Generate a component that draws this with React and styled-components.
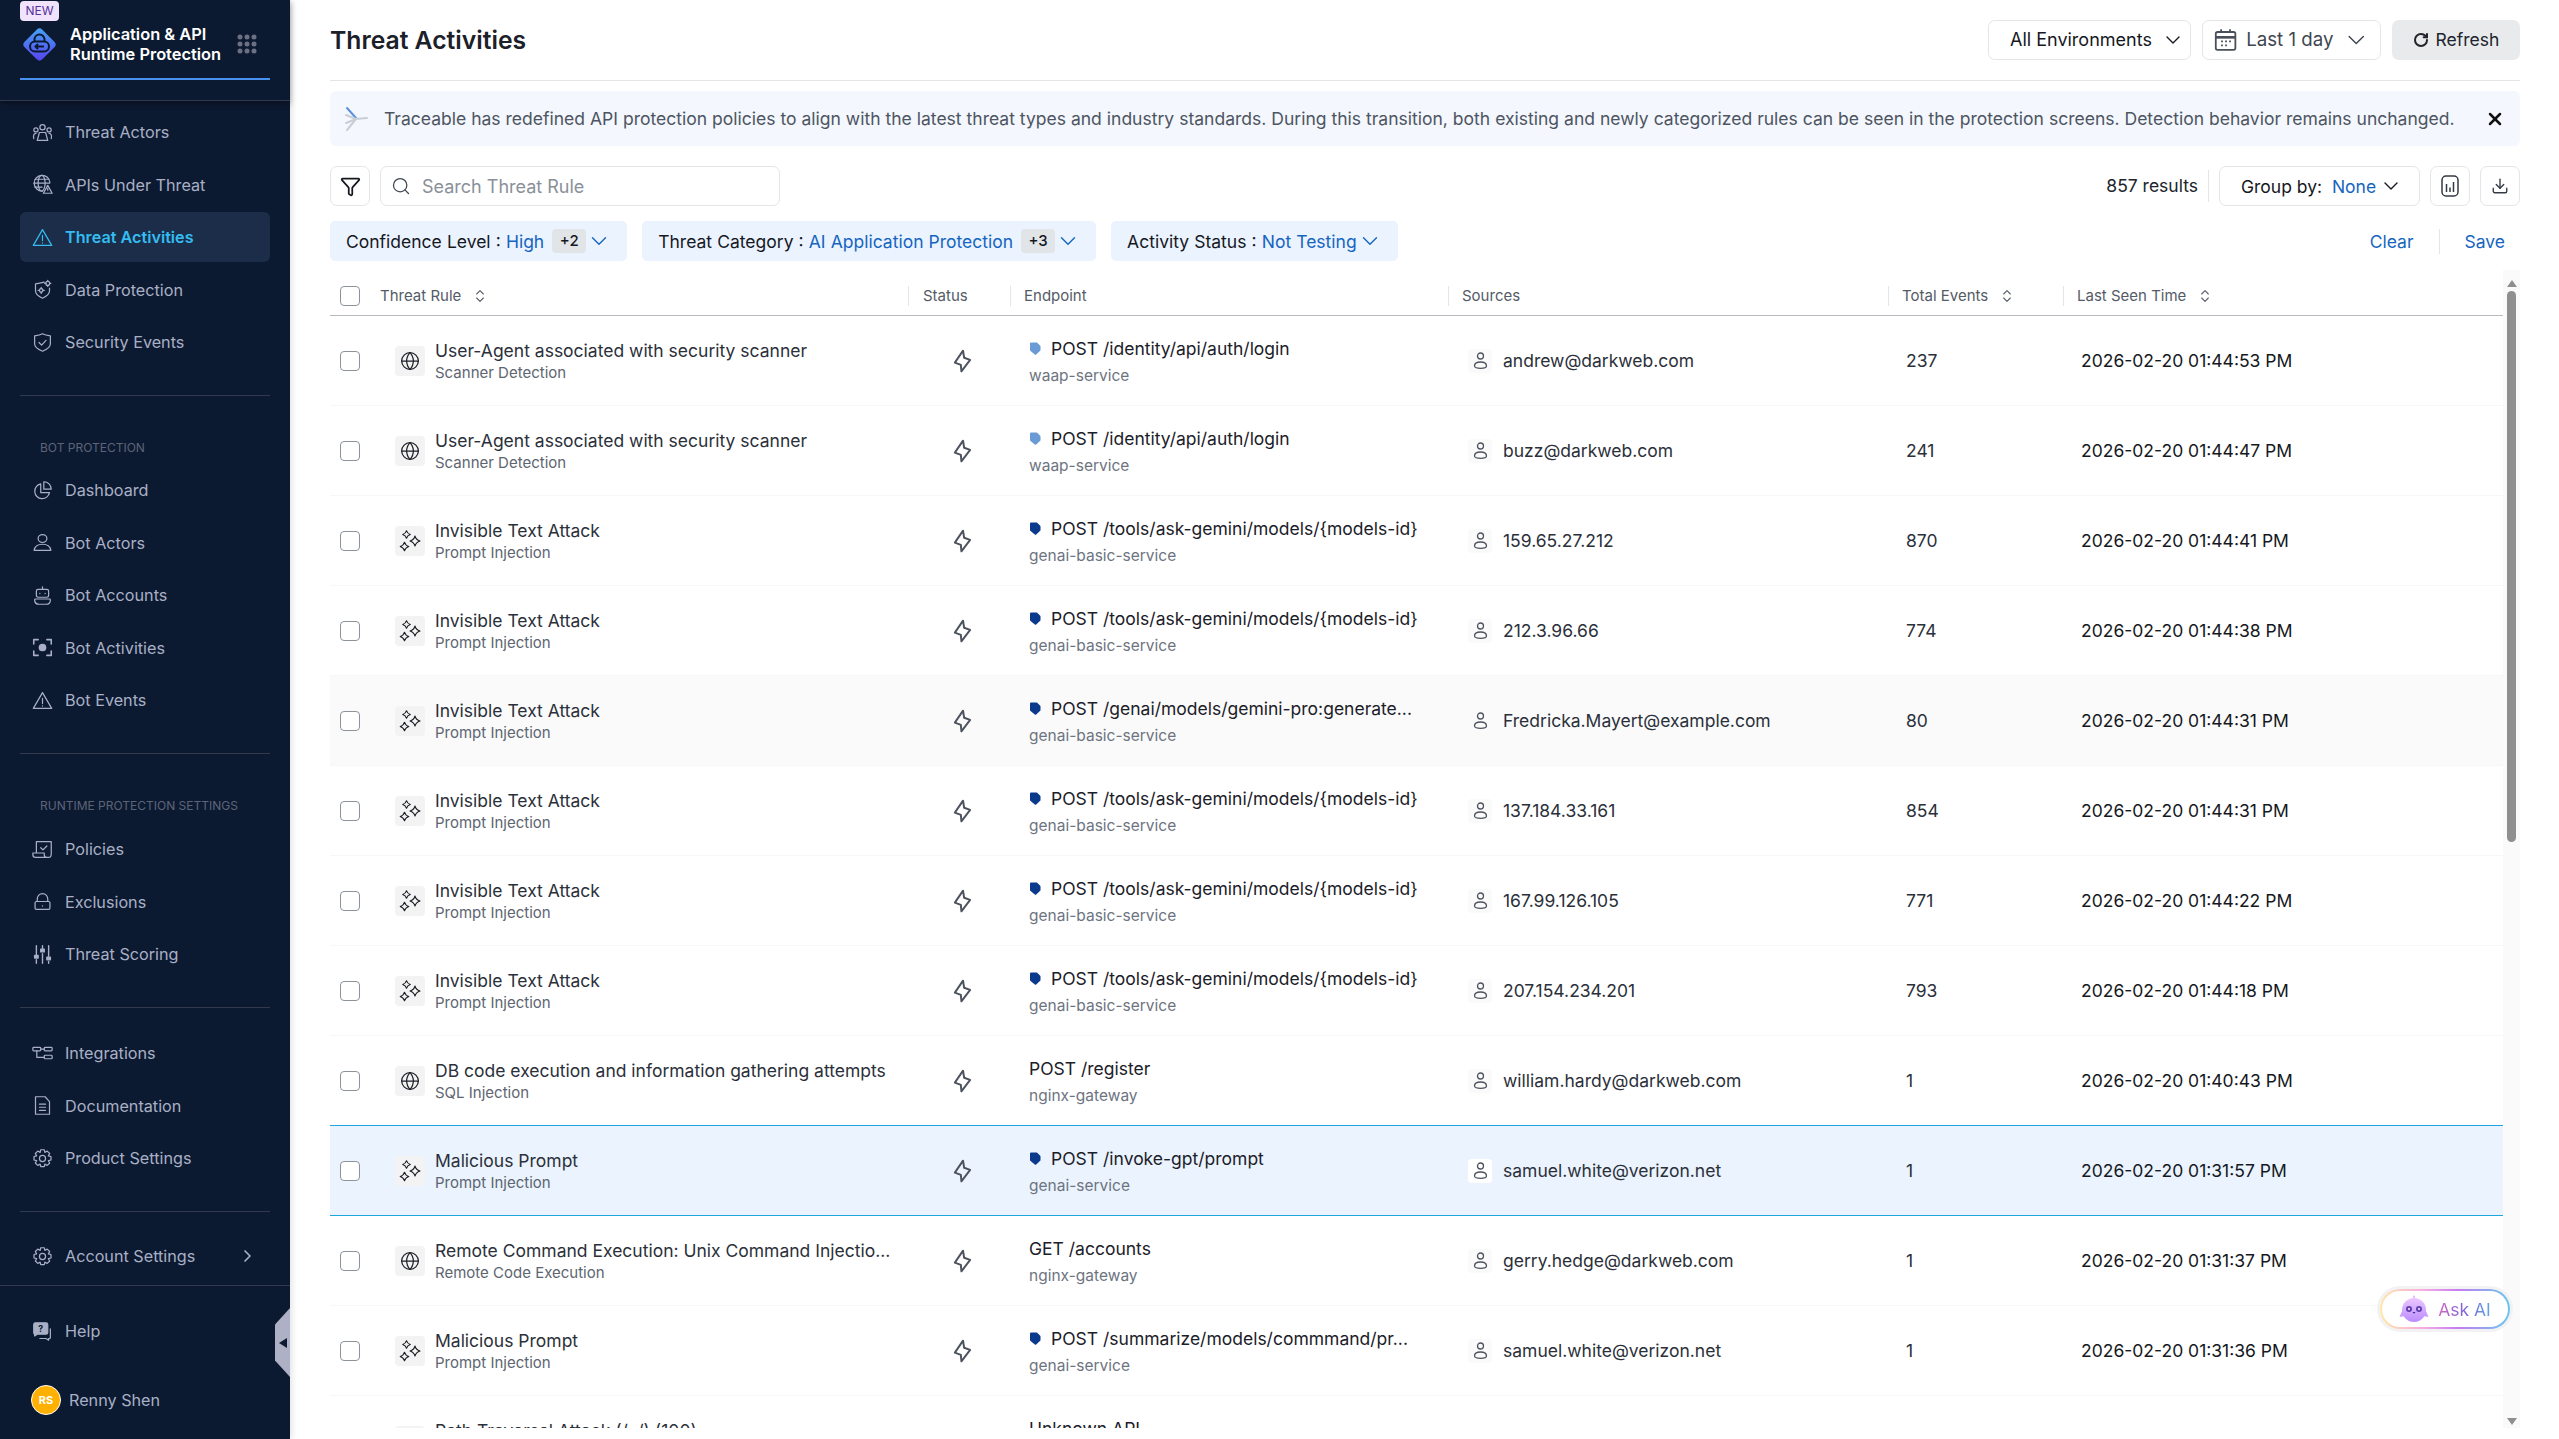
import React from "react";
import styled, { createGlobalStyle } from "styled-components";
import {
  ChevronDown,
  ChevronRight,
  ChevronsUpDown,
  Download,
  Funnel,
  Globe,
  RotateCw,
  Search,
  X,
} from "lucide-react";

const GlobalStyle = createGlobalStyle`
  html, body {
    margin: 0;
    padding: 0;
    background: #fff;
  }
  body {
    font-family: "Inter", "Liberation Sans", sans-serif;
    overflow: hidden;
  }
  * {
    box-sizing: border-box;
  }
`;

const Page = styled.div`
  display: flex;
  width: 2559px;
  height: 1439px;
  overflow: hidden;
`;

/* ---------- sidebar ---------- */

const Sidebar = styled.aside`
  position: relative;
  flex: 0 0 290px;
  height: 100%;
  background: #0c1a31;
  display: flex;
  flex-direction: column;
  box-shadow: 2px 0 6px rgba(20, 30, 50, 0.12);
`;

const BrandBar = styled.div`
  height: 101px;
  padding: 0 20px;
  border-bottom: 1px solid #33394c;
  box-shadow: 0 3px 6px rgba(0, 0, 0, 0.35);
`;

const Brand = styled.div`
  position: relative;
  height: 80px;
  display: flex;
  align-items: center;
  padding: 10px 13px 0 1px;
  gap: 12px;
  border-bottom: 2px solid #4a90ee;
`;

const NewBadge = styled.span`
  position: absolute;
  left: 0;
  top: 1px;
  width: 39px;
  height: 20px;
  border-radius: 4px;
  background: #f1e3fb;
  color: #57329c;
  font-size: 12px;
  line-height: 20px;
  text-align: center;
`;

const BrandName = styled.div`
  flex: 1;
  color: #fff;
  font-size: 16.4px;
  line-height: 20px;
  font-weight: 600;
  white-space: nowrap;
`;

const NavGroup = styled.nav`
  display: flex;
  flex-direction: column;
  gap: 2.5px;
  margin: ${(p) => p.$top || 0}px 20px 0;
`;

const NavItem = styled.div`
  height: 50px;
  display: flex;
  align-items: center;
  gap: 12px;
  padding: 0 12px;
  border-radius: 6px;
  font-size: 16.2px;
  white-space: nowrap;
  background: ${(p) => (p.$active ? "#1b2d49" : "transparent")};
  color: ${(p) => (p.$active ? "#35bcf0" : "#a9b0c6")};
  font-weight: ${(p) => (p.$active ? 600 : 400)};
  svg {
    flex: 0 0 21px;
  }
`;

const NavLabel = styled.div`
  flex: 1;
`;

const Divider = styled.div`
  height: 1px;
  margin: ${(p) => p.$top}px 20px 0;
  background: #33394c;
`;

const SectionLabel = styled.div`
  margin: ${(p) => p.$top}px 40px 0;
  height: 16px;
  line-height: 16px;
  font-size: 12px;
  color: #5d6479;
  white-space: nowrap;
`;

const FooterRule = styled.div`
  height: 1px;
  margin-top: 4px;
  background: #33394c;
`;

const Avatar = styled.span`
  width: 30px;
  height: 30px;
  margin-left: -1px;
  border-radius: 50%;
  border: 1px solid #fff;
  background: #ffb000;
  color: #fff;
  font-size: 11px;
  font-weight: 700;
  display: flex;
  align-items: center;
  justify-content: center;
`;

const UserItem = styled(NavItem)`
  gap: 8px;
  margin-top: 16px;
`;

const CollapseHandle = styled.div`
  position: absolute;
  right: 0;
  top: 1308px;
  width: 15px;
  height: 69px;
  background: #aeb1c6;
  clip-path: polygon(100% 0, 100% 100%, 0 76%, 0 24%);
  display: flex;
  align-items: center;
  justify-content: flex-end;
  padding-right: 3px;
  &::before {
    content: "";
    border-style: solid;
    border-width: 5px 8px 5px 0;
    border-color: transparent #0c1a31 transparent transparent;
  }
`;

/* ---------- main ---------- */

const Main = styled.main`
  flex: 1;
  min-width: 0;
  display: flex;
  flex-direction: column;
  padding: 0 39px 0 40px;
`;

const TopBar = styled.header`
  flex: 0 0 81px;
  display: flex;
  align-items: center;
  gap: 11px;
  border-bottom: 1px solid #e4e5e8;
  padding-bottom: 1px;
`;

const Title = styled.h1`
  flex: 1;
  margin: 0;
  font-size: 24.7px;
  font-weight: 600;
  color: #1b2029;
`;

const OutlineBox = styled.div`
  height: 40px;
  display: flex;
  align-items: center;
  border: 1px solid #e4e5e8;
  border-radius: 7px;
  background: #fff;
  white-space: nowrap;
  font-size: 17.5px;
  color: #15181e;
`;

const EnvSelect = styled(OutlineBox)`
  width: 203px;
  padding: 0 5px 0 21px;
  justify-content: space-between;
  font-size: 18px;
`;

const DateSelect = styled(OutlineBox)`
  width: 179px;
  padding: 0 9px 0 11px;
  gap: 9px;
  color: #3f4652;
  font-size: 18.7px;
`;

const DateText = styled.span`
  flex: 1;
`;

const RefreshButton = styled.div`
  width: 128px;
  height: 40px;
  display: flex;
  align-items: center;
  justify-content: center;
  gap: 7px;
  border-radius: 7px;
  background: #e9eaec;
  color: #20242c;
  font-size: 17.5px;
`;

const Banner = styled.div`
  flex: 0 0 55px;
  margin-top: 10px;
  display: flex;
  align-items: center;
  padding: 0 15px 0 13px;
  gap: 15px;
  border-radius: 6px;
  background: #f4f7fe;
  font-size: 17.55px;
  color: #4d5561;
  white-space: nowrap;
`;

const BannerText = styled.span`
  flex: 1;
`;

const Toolbar = styled.div`
  flex: 0 0 40px;
  margin-top: 20px;
  display: flex;
  align-items: center;
  gap: 10px;
`;

const IconButton = styled(OutlineBox)`
  width: 40px;
  justify-content: center;
`;

const SearchBox = styled(OutlineBox)`
  width: 400px;
  padding: 0 10px;
  gap: 11px;
  color: #8a9099;
  font-size: 18px;
`;

const Results = styled.div`
  margin-left: auto;
  padding-right: 10px;
  border-right: 1px solid #e4e5e8;
  height: 32px;
  line-height: 32px;
  font-size: 17.5px;
  color: #20242c;
`;

const GroupBy = styled(OutlineBox)`
  width: 201px;
  padding: 0 16px 0 21px;
  justify-content: space-between;
`;

const Blue = styled.span`
  color: #1565c0;
`;

const ChipRow = styled.div`
  flex: 0 0 40px;
  margin-top: 15px;
  display: flex;
  align-items: center;
  gap: 15px;
`;

const Chip = styled.div`
  height: 40px;
  display: flex;
  align-items: center;
  padding: 0 15px 0 16px;
  border-radius: 5px;
  background: #ebf3fe;
  font-size: 17.5px;
  word-spacing: 0.2px;
  color: #15181e;
  white-space: nowrap;
`;

const ChipCount = styled.span`
  width: 34px;
  height: 24px;
  line-height: 24px;
  margin-left: 8px;
  border-radius: 4px;
  background: #e2e5e8;
  font-size: 15px;
  font-weight: 500;
  text-align: center;
`;

const ChipActions = styled.div`
  margin-left: auto;
  padding-right: 15px;
  display: flex;
  align-items: center;
  font-size: 17.5px;
  color: #1565c0;
`;

const ActionRule = styled.span`
  width: 1px;
  height: 25px;
  margin: 0 25px;
  background: #e4e5e8;
`;

const TableArea = styled.div`
  flex: 1;
  min-height: 0;
  margin: 9px 0 11px;
  display: flex;
`;

const Table = styled.div`
  flex: 1;
  min-width: 0;
  overflow: hidden;
`;

const COLUMNS = "578px 102px 438px 440px 175px 440px";

const HeadRow = styled.div`
  height: 46px;
  padding-top: 6px;
  display: grid;
  grid-template-columns: ${COLUMNS};
  align-items: center;
  border-bottom: 1px solid #b7babe;
`;

const HeadCell = styled.div`
  height: 20px;
  display: flex;
  align-items: center;
  gap: 11px;
  padding-left: ${(p) => p.$pad || 13}px;
  border-left: ${(p) => (p.$first ? "none" : "1px solid #e4e5e8")};
  font-size: 15px;
  color: #545b66;
  white-space: nowrap;
`;

const Check = styled.span`
  flex: 0 0 20px;
  width: 20px;
  height: 20px;
  border: 1px solid #8d939b;
  border-radius: 4px;
  background: #fff;
`;

const HeadCheck = styled(Check)`
  margin-right: 9px;
`;

const Row = styled.div`
  height: 90px;
  display: grid;
  grid-template-columns: ${COLUMNS};
  align-items: center;
  border-bottom: 1px solid ${(p) => (p.$selected ? "#1ea7dc" : "#f7f7f8")};
  background: ${(p) => (p.$selected ? "#eaf3fe" : p.$hover ? "#fafafa" : "#fff")};
  box-shadow: ${(p) => (p.$selected ? "0 -1px 0 #1ea7dc" : "none")};
`;

const RuleCell = styled.div`
  display: flex;
  align-items: center;
  padding-left: 10px;
  min-width: 0;
`;

const RuleTile = styled.span`
  flex: 0 0 30px;
  height: 30px;
  margin: 0 10px 0 35px;
  border-radius: 4px;
  background: #f3f3f4;
  color: #1d2027;
  display: flex;
  align-items: center;
  justify-content: center;
`;

const Stack = styled.div`
  display: flex;
  flex-direction: column;
  min-width: 0;
  padding-top: 2px;
`;

const RuleName = styled.div`
  font-size: 17.5px;
  line-height: 22px;
  color: #2b303a;
  white-space: nowrap;
`;

const RuleKind = styled.div`
  font-size: 15px;
  line-height: 22px;
  color: #5d6570;
  white-space: nowrap;
`;

const StatusCell = styled.div`
  display: flex;
  justify-content: center;
  padding-left: 7px;
  color: #4d535e;
`;

const EndpointCell = styled.div`
  padding-left: 19px;
`;

const EndpointLine = styled.div`
  display: flex;
  align-items: center;
  gap: 10px;
  height: 26px;
  font-size: 17.5px;
  color: #1b2029;
  white-space: nowrap;
`;

const Service = styled.div`
  height: 25px;
  line-height: 29px;
  font-size: 15.5px;
  color: #6d747f;
  white-space: nowrap;
`;

const SourceCell = styled.div`
  display: flex;
  align-items: center;
  gap: 11px;
  padding-left: 20px;
  font-size: 17.5px;
  color: #2b303a;
  white-space: nowrap;
`;

const PersonTile = styled.span`
  width: 24px;
  height: 24px;
  border-radius: 4px;
  background: ${(p) => (p.$selected ? "#fff" : "#fafafa")};
  color: #4d535e;
  display: flex;
  align-items: center;
  justify-content: center;
`;

const EventsCell = styled.div`
  padding-left: 18px;
  font-size: 17.5px;
  color: #2b303a;
`;

const TimeCell = styled.div`
  padding-left: 18px;
  font-size: 17.5px;
  color: #15181e;
  white-space: nowrap;
`;

const Scrollbar = styled.div`
  flex: 0 0 17px;
  background: #fafafa;
  display: flex;
  flex-direction: column;
  align-items: center;
  padding: 10px 0 3px;
`;

const ScrollUp = styled.span`
  border-style: solid;
  border-width: 0 5px 7px;
  border-color: transparent transparent #8f8f8f;
`;

const ScrollDown = styled.span`
  margin-top: auto;
  border-style: solid;
  border-width: 7px 5px 0;
  border-color: #8f8f8f transparent transparent;
`;

const ScrollThumb = styled.span`
  width: 9px;
  height: 551px;
  margin-top: 4px;
  border-radius: 5px;
  background: #8f8f8f;
`;

const AskAi = styled.div`
  position: absolute;
  left: 2380px;
  top: 1289px;
  width: 130px;
  height: 40px;
  padding: 2px;
  border-radius: 20px;
  background: linear-gradient(90deg, #ffe7a6, #f6a8e6 35%, #c77cf2 60%, #68c8ee);
  box-shadow: 0 0 0 3px #f2f2f4;
`;

const AskAiInner = styled.div`
  height: 100%;
  border-radius: 18px;
  background: #fff;
  display: flex;
  align-items: center;
  justify-content: center;
  gap: 9px;
`;

const AskAiText = styled.span`
  font-size: 17.5px;
  background: linear-gradient(90deg, #cf68c2, #7d62d9 50%, #5da5e8);
  -webkit-background-clip: text;
  background-clip: text;
  color: transparent;
`;

/* ---------- drawn icons ---------- */

const Ico = ({ children, size = 21, box = 24, sw = 1.4 }) => (
  <svg width={size} height={size} viewBox={`0 0 ${box} ${box}`} fill="none" stroke="currentColor" strokeWidth={sw} strokeLinecap="round" strokeLinejoin="round">
    {children}
  </svg>
);

const NavIcons = {
  actors: (
    <Ico>
      <circle cx="12" cy="6" r="3" />
      <circle cx="4.5" cy="9" r="2.4" />
      <circle cx="19.5" cy="9" r="2.4" />
      <path d="M6 21l2.5-9h7l2.5 9z" />
      <path d="M2 19c-.8-3 0-6 2.5-6M22 19c.8-3 0-6-2.5-6" />
    </Ico>
  ),
  apis: (
    <Ico>
      <path d="M12 19.5A9 9 0 1 1 20.5 10" />
      <ellipse cx="11" cy="10.5" rx="4" ry="9" />
      <path d="M2 10.5h18M3.5 6h15M3.5 15h8" />
      <path d="M18 13l5 9H13z" />
      <path d="M18 16.5v2" />
    </Ico>
  ),
  warn: (
    <Ico>
      <path d="M12 3L1.5 21h21z" />
      <path d="M12 9.5v6M12 18v.3" />
    </Ico>
  ),
  data: (
    <Ico>
      <path d="M14 3.5c-3 .8-6 1.5-10 2v8c0 4 3.5 6.5 8 8.5 4.5-2 8-4.5 8-8.5v-3" />
      <circle cx="10.5" cy="13" r="2" />
      <path d="M10.5 9.5v1.5M10.5 15v1.5M7 13h1.5M12.5 13H14" />
      <circle cx="18" cy="5" r="2.2" />
      <path d="M18 1.5v1.3M18 7.2v1.3M14.5 5h1.3M20.2 5h1.3" />
    </Ico>
  ),
  security: (
    <Ico>
      <path d="M12 2c3 1.5 6 2 9 2.5v9c0 4-4 6.5-9 8.5-5-2-9-4.5-9-8.5v-9C6 4 9 3.5 12 2z" />
      <path d="M8 12l3 3 5-5.5" />
    </Ico>
  ),
  dashboard: (
    <Ico>
      <path d="M10 4.5a8.5 8.5 0 1 0 10 10H10z" />
      <path d="M13.5 2a8.5 8.5 0 0 1 8.5 8.5h-8.5z" />
    </Ico>
  ),
  botActor: (
    <Ico>
      <ellipse cx="12" cy="7.5" rx="5" ry="4.5" />
      <path d="M2.5 21c.5-4.5 3-7 9.5-7s9 2.5 9.5 7z" />
    </Ico>
  ),
  botAccount: (
    <Ico>
      <rect x="5" y="5" width="14" height="9" rx="2" />
      <path d="M12 2v3M9 9.5v.3M15 9.5v.3" />
      <path d="M4 16h16a1 1 0 0 1 1 1c0 3-2 5-5 5H8c-3 0-5-2-5-5a1 1 0 0 1 1-1z" />
    </Ico>
  ),
  botActivity: (
    <Ico sw={1.8}>
      <path d="M7 3H2v5M17 3h5v5M7 21H2v-5M17 21h5v-5" />
      <circle cx="12" cy="12" r="3.5" fill="currentColor" />
    </Ico>
  ),
  policies: (
    <Ico>
      <path d="M5 16V3h17v14c0 2-1 4-3 4H4c-2 0-3-1.5-3-3v-2h13v2c0 2 1 3 3 3" />
      <path d="M10 10l2.5 2.5L17 8" />
    </Ico>
  ),
  lock: (
    <Ico>
      <path d="M6 12V9a6 6 0 0 1 12 0v3" />
      <rect x="3.5" y="12" width="17" height="9" rx="1.5" />
      <path d="M12 17v.2" />
    </Ico>
  ),
  scoring: (
    <Ico sw={1.6}>
      <path d="M5 2v10M5 18v4M12 2v3M12 11v11M19 2v12M19 20v2" />
      <rect x="3" y="13" width="4" height="3" fill="currentColor" />
      <rect x="10" y="6" width="4" height="3" fill="currentColor" />
      <rect x="17" y="15" width="4" height="3" fill="currentColor" />
    </Ico>
  ),
  integrations: (
    <Ico>
      <rect x="1" y="5" width="9" height="4" rx="1" />
      <rect x="14" y="5" width="9" height="4" rx="1" />
      <rect x="14" y="14" width="9" height="4" rx="1" />
      <path d="M10 7h4M5.5 9v7.5H14" />
    </Ico>
  ),
  docs: (
    <Ico>
      <path d="M4 2h11l5 5.5V22H4z" />
      <path d="M8.5 10.5h7M8.5 14h7M8.5 17.5h7" />
    </Ico>
  ),
  gear: (
    <Ico>
      <circle cx="12" cy="12" r="3.5" />
      <path d="M10 2h4l.7 3 2.7-1.5 2.8 2.8-1.5 2.7 3 .7v4l-3 .7 1.5 2.7-2.8 2.8-2.7-1.5-.7 3h-4l-.7-3-2.7 1.5-2.8-2.8 1.5-2.7-3-.7v-4l3-.7-1.5-2.7 2.8-2.8 2.7 1.5z" />
    </Ico>
  ),
  help: (
    <Ico>
      <path d="M2 4a2 2 0 0 1 2-2h12a2 2 0 0 1 2 2v9a2 2 0 0 1-2 2H6l-3 2v-2a2 2 0 0 1-1-2z" fill="currentColor" />
      <path d="M21 9v10a1 1 0 0 1-1 1h-1v2l-3-2H9" />
      <text x="10" y="12" fontSize="10" fontWeight="700" fill="#0c1a31" stroke="none" textAnchor="middle">?</text>
    </Ico>
  ),
};

const BrandLogo = () => (
  <svg width="37" height="37" viewBox="0 0 37 37">
    <defs>
      <linearGradient id="brandGrad" x1="0" y1="0" x2="1" y2="1">
        <stop offset="0" stopColor="#43a6f7" />
        <stop offset="1" stopColor="#5a3ff0" />
      </linearGradient>
    </defs>
    <rect x="6" y="6" width="25" height="25" rx="4" transform="rotate(45 18.5 18.5)" fill="url(#brandGrad)" />
    <path d="M13.5 16v-2.5a5 5 0 0 1 10 0V16" fill="none" stroke="#0c1a31" strokeWidth="2" />
    <rect x="9" y="15.5" width="19" height="10" rx="5" fill="none" stroke="#0c1a31" strokeWidth="2" />
    <path d="M23 20.5h-8M17 18l-2.5 2.5L17 23" fill="none" stroke="#0c1a31" strokeWidth="2" />
  </svg>
);

const DotsGrid = () => (
  <svg width="20" height="20" viewBox="0 0 20 20" fill="#6c7082">
    {[3, 10, 17].map((y) =>
      [3, 10, 17].map((x) => <circle key={`${x}-${y}`} cx={x} cy={y} r="2.5" />)
    )}
  </svg>
);

const Star = ({ x, y, r }) => (
  <path d={`M${x} ${y - r}Q${x + r * 0.22} ${y - r * 0.22} ${x + r} ${y}Q${x + r * 0.22} ${y + r * 0.22} ${x} ${y + r}Q${x - r * 0.22} ${y + r * 0.22} ${x - r} ${y}Q${x - r * 0.22} ${y - r * 0.22} ${x} ${y - r}z`} />
);

const Sparkles = () => (
  <svg width="22" height="22" viewBox="0 0 22 22" fill="none" stroke="currentColor" strokeWidth="1.1" strokeLinejoin="round">
    <Star x={7.5} y={4.5} r={3.8} />
    <Star x={16} y={11} r={5} />
    <Star x={5.5} y={16.5} r={4.3} />
  </svg>
);

const TagMark = ({ color }) => (
  <svg width="12" height="13" viewBox="0 0 12 13" fill={color}>
    <path d="M2 0.5h5.5a1 1 0 0 1 .7.3l3 3a1 1 0 0 1 .3.7V8a1 1 0 0 1-.3.7l-4 3.8a1 1 0 0 1-1.4 0l-4.5-3.8A1 1 0 0 1 1 8V1.5a1 1 0 0 1 1-1z" />
  </svg>
);

const BoltIcon = () => (
  <svg width="19" height="24" viewBox="0 0 17 22" fill="none" stroke="currentColor" strokeWidth="1.8" strokeLinejoin="round">
    <path d="M9 1.5L1.5 12.5 7 14.5 7.5 20.5 15.5 10 10 8z" />
  </svg>
);

const PersonIcon = () => (
  <svg width="15" height="17" viewBox="0 0 15 17" fill="none" stroke="currentColor" strokeWidth="1.3">
    <circle cx="7.5" cy="4" r="3" />
    <path d="M1.5 14c0-2.5 2.5-4 6-4s6 1.5 6 4c0 1.5-2.5 2.3-6 2.3s-6-.8-6-2.3z" />
  </svg>
);

const CalendarIcon = () => (
  <svg width="26" height="26" viewBox="0 0 26 26" fill="none" stroke="#4a5059" strokeWidth="2">
    <rect x="2" y="4" width="22" height="20" rx="2" />
    <path d="M2 10h22" strokeWidth="3" />
    <path d="M8 1v4M18 1v4" />
    <path d="M8 14.5h2M12.5 14.5h2M17 14.5h2M8 19h2M12.5 19h2" />
  </svg>
);

const ChartIcon = () => (
  <svg width="18" height="22" viewBox="0 0 18 22" fill="none" stroke="#343a44" strokeWidth="1.5">
    <rect x="1" y="1" width="16" height="20" rx="4" />
    <path d="M5.5 9v8M9 12.5V17M12.5 7v10" />
  </svg>
);

const BannerMark = () => (
  <svg width="26" height="26" viewBox="0 0 26 26" fill="none" strokeWidth="2" strokeLinecap="round">
    <path d="M4 2l9 10" stroke="#5a8fe0" />
    <path d="M3 9l10 4 11-1" stroke="#c9cdd6" />
    <path d="M4 24l9-11" stroke="#c9cdd6" />
    <path d="M3 17l10-4" stroke="#c9cdd6" />
  </svg>
);

const Bird = () => (
  <svg width="30" height="30" viewBox="0 0 30 30">
    <defs>
      <linearGradient id="birdGrad" x1="0" y1="0" x2="0" y2="1">
        <stop offset="0" stopColor="#ebc6ff" />
        <stop offset="1" stopColor="#bb8cff" />
      </linearGradient>
    </defs>
    <circle cx="15" cy="2.5" r="1" fill="#dcb0ff" />
    <path d="M15 3v3" stroke="#dcb0ff" strokeWidth="1.2" />
    <path d="M4 15L0.5 23l5-1zM26 15l3.5 8-5-1z" fill="#c89cff" />
    <circle cx="15" cy="16" r="12" fill="url(#birdGrad)" />
    <circle cx="10" cy="15" r="3" fill="#5a3fb0" />
    <circle cx="20" cy="15" r="3" fill="#5a3fb0" />
    <circle cx="10" cy="15" r="1.2" fill="#e7bcff" />
    <circle cx="20" cy="15" r="1.2" fill="#e7bcff" />
    <path d="M13.5 18h3l-1.5 1.8z" fill="#3b2a80" />
  </svg>
);

/* ---------- data ---------- */

const mainNav = [
  ["actors", "Threat Actors"],
  ["apis", "APIs Under Threat"],
  ["warn", "Threat Activities", true],
  ["data", "Data Protection"],
  ["security", "Security Events"],
];

const botNav = [
  ["dashboard", "Dashboard"],
  ["botActor", "Bot Actors"],
  ["botAccount", "Bot Accounts"],
  ["botActivity", "Bot Activities"],
  ["warn", "Bot Events"],
];

const settingsNav = [
  ["policies", "Policies"],
  ["lock", "Exclusions"],
  ["scoring", "Threat Scoring"],
];

const linkNav = [
  ["integrations", "Integrations"],
  ["docs", "Documentation"],
  ["gear", "Product Settings"],
];

const scanner = ["globe", "User-Agent associated with security scanner", "Scanner Detection"];
const invisible = ["spark", "Invisible Text Attack", "Prompt Injection"];
const malicious = ["spark", "Malicious Prompt", "Prompt Injection"];
const gemini = ["POST /tools/ask-gemini/models/{models-id}", "genai-basic-service", "#0b3a8c"];
const login = ["POST /identity/api/auth/login", "waap-service", "#6a9bd4"];

const rows = [
  { rule: scanner, ep: login, src: "andrew@darkweb.com", n: 237, t: "01:44:53" },
  { rule: scanner, ep: login, src: "buzz@darkweb.com", n: 241, t: "01:44:47" },
  { rule: invisible, ep: gemini, src: "159.65.27.212", n: 870, t: "01:44:41" },
  { rule: invisible, ep: gemini, src: "212.3.96.66", n: 774, t: "01:44:38" },
  {
    rule: invisible,
    ep: ["POST /genai/models/gemini-pro:generate...", "genai-basic-service", "#0b3a8c"],
    src: "Fredricka.Mayert@example.com",
    n: 80,
    t: "01:44:31",
    hover: true,
  },
  { rule: invisible, ep: gemini, src: "137.184.33.161", n: 854, t: "01:44:31" },
  { rule: invisible, ep: gemini, src: "167.99.126.105", n: 771, t: "01:44:22" },
  { rule: invisible, ep: gemini, src: "207.154.234.201", n: 793, t: "01:44:18" },
  {
    rule: ["globe", "DB code execution and information gathering attempts", "SQL Injection"],
    ep: ["POST /register", "nginx-gateway"],
    src: "william.hardy@darkweb.com",
    n: 1,
    t: "01:40:43",
  },
  {
    rule: malicious,
    ep: ["POST /invoke-gpt/prompt", "genai-service", "#0b3a8c"],
    src: "samuel.white@verizon.net",
    n: 1,
    t: "01:31:57",
    selected: true,
  },
  {
    rule: ["globe", "Remote Command Execution: Unix Command Injectio...", "Remote Code Execution"],
    ep: ["GET /accounts", "nginx-gateway"],
    src: "gerry.hedge@darkweb.com",
    n: 1,
    t: "01:31:37",
  },
  {
    rule: malicious,
    ep: ["POST /summarize/models/commmand/pr...", "genai-service", "#0b3a8c"],
    src: "samuel.white@verizon.net",
    n: 1,
    t: "01:31:36",
  },
  {
    rule: ["globe", "Path Traversal Attack (/../) (100)", "Path Traversal"],
    ep: ["Unknown API", "nginx-gateway"],
    src: "",
    n: "",
    t: "",
  },
];

const Nav = ({ items, top }) => (
  <NavGroup $top={top}>
    {items.map(([icon, label, active]) => (
      <NavItem key={label} $active={active}>
        {NavIcons[icon]}
        <NavLabel>{label}</NavLabel>
      </NavItem>
    ))}
  </NavGroup>
);

const SortIcon = () => <ChevronsUpDown size={16} strokeWidth={1.6} />;

const ChipChevron = () => <ChevronDown size={26} strokeWidth={1.3} color="#1565c0" />;

const App = () => {
  return (
    <Page>
      <GlobalStyle />
      <Sidebar>
        <BrandBar>
          <Brand>
            <NewBadge>NEW</NewBadge>
            <BrandLogo />
            <BrandName>
              Application &amp; API
              <br />
              Runtime Protection
            </BrandName>
            <DotsGrid />
          </Brand>
        </BrandBar>
        <Nav items={mainNav} top={6} />
        <Divider $top={28} />
        <SectionLabel $top={44}>BOT PROTECTION</SectionLabel>
        <Nav items={botNav} top={9} />
        <Divider $top={28} />
        <SectionLabel $top={44}>RUNTIME PROTECTION SETTINGS</SectionLabel>
        <Nav items={settingsNav} top={10} />
        <Divider $top={28} />
        <Nav items={linkNav} top={20} />
        <Divider $top={28} />
        <NavGroup $top={19}>
          <NavItem>
            {NavIcons.gear}
            <NavLabel>Account Settings</NavLabel>
            <ChevronRight size={20} />
          </NavItem>
        </NavGroup>
        <FooterRule />
        <NavGroup $top={20}>
          <NavItem>
            {NavIcons.help}
            <NavLabel>Help</NavLabel>
          </NavItem>
          <UserItem>
            <Avatar>RS</Avatar>
            <NavLabel>Renny Shen</NavLabel>
          </UserItem>
        </NavGroup>
        <CollapseHandle />
      </Sidebar>

      <Main>
        <TopBar>
          <Title>Threat Activities</Title>
          <EnvSelect>
            All Environments
            <ChevronDown size={24} strokeWidth={1.4} />
          </EnvSelect>
          <DateSelect>
            <CalendarIcon />
            <DateText>Last 1 day</DateText>
            <ChevronDown size={32} strokeWidth={1.2} color="#3f4652" />
          </DateSelect>
          <RefreshButton>
            <RotateCw size={16} strokeWidth={3} />
            Refresh
          </RefreshButton>
        </TopBar>

        <Banner>
          <BannerMark />
          <BannerText>
            Traceable has redefined API protection policies to align with the latest threat types and industry standards. During this transition, both existing and newly categorized rules can be seen in the protection screens. Detection behavior remains unchanged.
          </BannerText>
          <X size={20} strokeWidth={3} color="#111" />
        </Banner>

        <Toolbar>
          <IconButton>
            <Funnel size={21} strokeWidth={2} />
          </IconButton>
          <SearchBox>
            <Search size={20} strokeWidth={1.5} color="#3f4652" />
            Search Threat Rule
          </SearchBox>
          <Results>857 results</Results>
          <GroupBy>
            <span>
              Group by:&nbsp; <Blue>None</Blue>
            </span>
            <ChevronDown size={24} strokeWidth={1.4} />
          </GroupBy>
          <IconButton>
            <ChartIcon />
          </IconButton>
          <IconButton>
            <Download size={18} strokeWidth={1.8} color="#343a44" />
          </IconButton>
        </Toolbar>

        <ChipRow>
          <Chip>
            <span>
              Confidence Level : <Blue>High</Blue>
            </span>
            <ChipCount>+2</ChipCount>
            <ChipChevron />
          </Chip>
          <Chip>
            <span>
              Threat Category : <Blue>AI Application Protection</Blue>
            </span>
            <ChipCount>+3</ChipCount>
            <ChipChevron />
          </Chip>
          <Chip>
            <span>
              Activity Status : <Blue>Not Testing</Blue>
            </span>
            <ChipChevron />
          </Chip>
          <ChipActions>
            Clear
            <ActionRule />
            Save
          </ChipActions>
        </ChipRow>

        <TableArea>
          <Table>
            <HeadRow>
              <HeadCell $first $pad={10}>
                <HeadCheck />
                Threat Rule
                <SortIcon />
              </HeadCell>
              <HeadCell $pad={14}>Status</HeadCell>
              <HeadCell>Endpoint</HeadCell>
              <HeadCell>Sources</HeadCell>
              <HeadCell>
                Total Events
                <SortIcon />
              </HeadCell>
              <HeadCell>
                Last Seen Time
                <SortIcon />
              </HeadCell>
            </HeadRow>
            {rows.map((r, i) => (
              <Row key={i} $selected={r.selected} $hover={r.hover}>
                <RuleCell>
                  <Check />
                  <RuleTile>
                    {r.rule[0] === "globe" ? <Globe size={20} strokeWidth={1.5} /> : <Sparkles />}
                  </RuleTile>
                  <Stack>
                    <RuleName>{r.rule[1]}</RuleName>
                    <RuleKind>{r.rule[2]}</RuleKind>
                  </Stack>
                </RuleCell>
                <StatusCell>
                  <BoltIcon />
                </StatusCell>
                <EndpointCell>
                  <EndpointLine>
                    {r.ep[2] && <TagMark color={r.ep[2]} />}
                    {r.ep[0]}
                  </EndpointLine>
                  <Service>{r.ep[1]}</Service>
                </EndpointCell>
                <SourceCell>
                  {r.src && (
                    <PersonTile $selected={r.selected}>
                      <PersonIcon />
                    </PersonTile>
                  )}
                  {r.src}
                </SourceCell>
                <EventsCell>{r.n}</EventsCell>
                <TimeCell>{r.t && `2026-02-20 ${r.t} PM`}</TimeCell>
              </Row>
            ))}
          </Table>
          <Scrollbar>
            <ScrollUp />
            <ScrollThumb />
            <ScrollDown />
          </Scrollbar>
        </TableArea>
      </Main>

      <AskAi>
        <AskAiInner>
          <Bird />
          <AskAiText>Ask AI</AskAiText>
        </AskAiInner>
      </AskAi>
    </Page>
  );
};

export default App;
